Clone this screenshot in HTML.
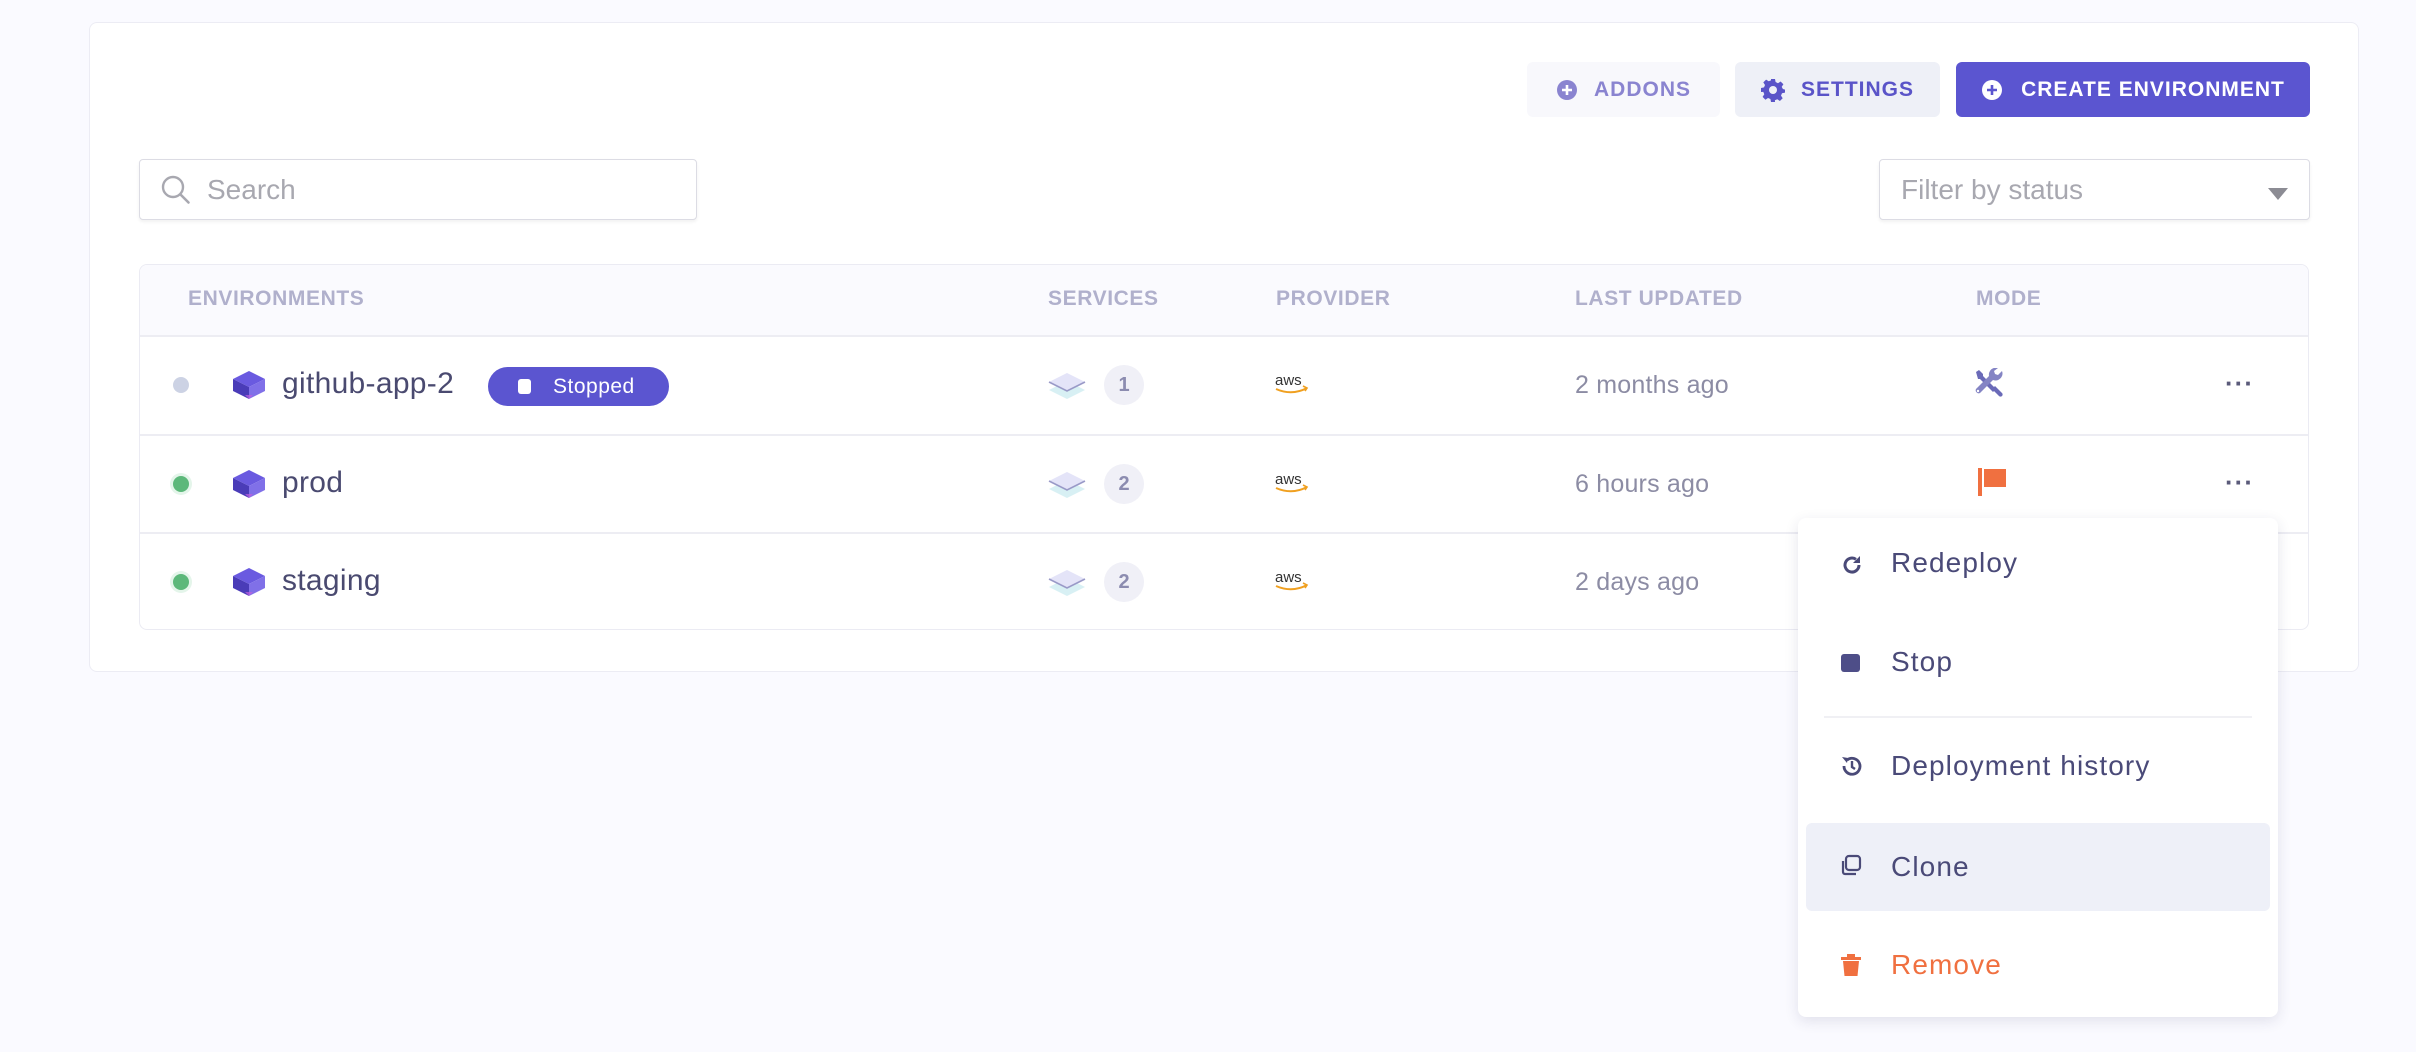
<!DOCTYPE html>
<html><head><meta charset="utf-8">
<style>
*{box-sizing:border-box;margin:0;padding:0}
body{width:2416px;height:1052px;background:#fafaff;font-family:"Liberation Sans",sans-serif;position:relative;overflow:hidden;color:#4a4a70}
.abs{position:absolute}
.card{left:89px;top:22px;width:2270px;height:650px;background:#fff;border:1px solid #ececf4;border-radius:8px}
.btn{height:55px;top:62px;border-radius:6px;display:flex;align-items:center;justify-content:center;font-weight:bold;font-size:21px;letter-spacing:1px}
.inp{top:159px;height:61px;background:#fff;border:1px solid #dcdce4;border-radius:4px;box-shadow:0 2px 3px rgba(0,0,0,.06);font-size:28px;color:#a8a8b0;display:flex;align-items:center}
.table{left:139px;top:264px;width:2170px;height:366px;border:1px solid #ebebf3;border-radius:8px;background:#fff;overflow:hidden}
.head{left:0;top:0;width:100%;height:72px;background:#fafafe;border-bottom:2px solid #ededf3}
.h{top:287px;font-size:21px;font-weight:bold;color:#b0b0cc;letter-spacing:.6px}
.line{left:140px;width:2168px;height:2px;background:#ededf3}
.dot{width:16px;height:16px;border-radius:50%}
.name{font-size:30px;color:#4a4a70;letter-spacing:.3px}
.badge{width:40px;height:40px;border-radius:50%;background:#f0f0f7;color:#8c8cb0;font-size:20px;font-weight:bold;display:flex;align-items:center;justify-content:center}
.time{font-size:25px;color:#8c8ca4;letter-spacing:.2px}
.dots{font-size:26px;color:#5a5a7a;font-weight:bold;letter-spacing:1px}
.menu{left:1798px;top:518px;width:480px;height:499px;background:#fff;border-radius:8px;box-shadow:0 4px 14px rgba(40,40,90,.12)}
.mi{left:93px;font-size:28px;letter-spacing:1.1px;color:#4a4a78}
</style></head><body>
<div class="abs card"></div>

<div class="abs btn" style="left:1527px;width:193px;background:#f8f8fc;color:#8a84d0"><svg width="22" height="22" viewBox="0 0 22 22" style="margin-right:16px"><circle cx="11" cy="11" r="10" fill="#8a84d0"/><path d="M11 6v10M6 11h10" stroke="#fff" stroke-width="2.6"/></svg>ADDONS</div>
<div class="abs btn" style="left:1735px;width:205px;background:#eef0f7;color:#5a54c8"><svg width="24" height="24" viewBox="0 0 24 24" style="margin-right:16px"><path fill="#5a54c8" d="M10 1h4l.6 3 2.4 1.2 2.6-1.7 2.8 2.8-1.7 2.6L21.9 11l2.1.6v3l-3 .6-1 2.4 1.7 2.6-2.8 2.8-2.6-1.7-2.4 1L14 24h-4l-.6-3-2.4-1-2.6 1.7-2.8-2.8 1.7-2.6-1-2.4L0 14v-4l3-.6 1-2.4L2.3 4.4 5.1 1.6l2.6 1.7L10 2.4z"/><circle cx="12" cy="12" r="4" fill="#eef0f7"/></svg>SETTINGS</div>
<div class="abs btn" style="left:1956px;width:354px;background:#5b55d0;color:#fff"><svg width="22" height="22" viewBox="0 0 22 22" style="margin-right:18px"><circle cx="11" cy="11" r="10" fill="#fff"/><path d="M11 6v10M6 11h10" stroke="#5b55d0" stroke-width="2.6"/></svg>CREATE ENVIRONMENT</div>

<div class="abs inp" style="left:139px;width:558px;padding-left:67px">Search</div>
<svg class="abs" style="left:160px;top:174px" width="32" height="32" viewBox="0 0 32 32"><circle cx="13" cy="13" r="10" fill="none" stroke="#a8a8b0" stroke-width="2.4"/><path d="M20.5 20.5l8 8" stroke="#a8a8b0" stroke-width="2.6" stroke-linecap="round"/></svg>
<div class="abs inp" style="left:1879px;width:431px;padding-left:21px">Filter by status</div>
<svg class="abs" style="left:2268px;top:188px" width="20" height="12" viewBox="0 0 20 12"><path d="M0 0h20L10 12z" fill="#8c8c94"/></svg>

<div class="abs table"><div class="abs head"></div></div>
<div class="abs h" style="left:188px">ENVIRONMENTS</div>
<div class="abs h" style="left:1048px">SERVICES</div>
<div class="abs h" style="left:1276px">PROVIDER</div>
<div class="abs h" style="left:1575px">LAST UPDATED</div>
<div class="abs h" style="left:1976px">MODE</div>
<div class="abs line" style="top:434px"></div>
<div class="abs line" style="top:532px"></div>

<div class="abs dot" style="left:173px;top:377px;background:#ccd2e4"></div>
<div class="abs dot" style="left:173px;top:476px;background:#5cb87a;box-shadow:0 0 0 3px #e4f5ea"></div>
<div class="abs dot" style="left:173px;top:574px;background:#5cb87a;box-shadow:0 0 0 3px #e4f5ea"></div>

<svg width="0" height="0" style="position:absolute"><defs><symbol id="cube" viewBox="0 0 36 32"><path d="M18 2l16 8-16 8-16-8z" fill="#6a5ae0"/><path d="M2 10l16 8v12L2 22z" fill="#4a3cb8"/><path d="M34 10l-16 8v12l16-8z" fill="#8070e8"/><path d="M14 26l4 4 4-4" fill="#c060e0" opacity=".7"/></symbol>
<symbol id="layers" viewBox="0 0 40 32"><path d="M20 12l18 9-18 9-18-9z" fill="#d8f0f4"/><path d="M20 4l18 9-18 9-18-9z" fill="#e4e4f8"/><path d="M2 13l18 9 18-9" fill="none" stroke="#9a9ac8" stroke-width="1.6"/></symbol>
<symbol id="aws" viewBox="0 0 36 24"><text x="1" y="13" font-family="Liberation Sans" font-size="15" fill="#333">aws</text><path d="M2 17q16 7 31-1" fill="none" stroke="#f0a020" stroke-width="2"/><path d="M29 14l4 2-2 3" fill="none" stroke="#f0a020" stroke-width="1.6"/></symbol></defs></svg>

<svg class="abs" style="left:231px;top:369px" width="36" height="32"><use href="#cube"/></svg>
<svg class="abs" style="left:231px;top:468px" width="36" height="32"><use href="#cube"/></svg>
<svg class="abs" style="left:231px;top:566px" width="36" height="32"><use href="#cube"/></svg>
<div class="abs name" style="left:282px;top:367px">github-app-2</div>
<div class="abs name" style="left:282px;top:466px">prod</div>
<div class="abs name" style="left:282px;top:564px">staging</div>
<div class="abs" style="left:488px;top:367px;width:181px;height:39px;border-radius:20px;background:#5b55d0;color:#fff;font-size:21px;display:flex;align-items:center;padding-left:30px;letter-spacing:.5px"><span style="width:13px;height:15px;background:#fff;border-radius:3px;margin-right:22px"></span>Stopped</div>

<svg class="abs" style="left:1047px;top:369px" width="40" height="32"><use href="#layers"/></svg>
<svg class="abs" style="left:1047px;top:468px" width="40" height="32"><use href="#layers"/></svg>
<svg class="abs" style="left:1047px;top:566px" width="40" height="32"><use href="#layers"/></svg>
<div class="abs badge" style="left:1104px;top:365px">1</div>
<div class="abs badge" style="left:1104px;top:464px">2</div>
<div class="abs badge" style="left:1104px;top:562px">2</div>

<svg class="abs" style="left:1274px;top:372px" width="36" height="24"><use href="#aws"/></svg>
<svg class="abs" style="left:1274px;top:471px" width="36" height="24"><use href="#aws"/></svg>
<svg class="abs" style="left:1274px;top:569px" width="36" height="24"><use href="#aws"/></svg>

<div class="abs time" style="left:1575px;top:371px">2 months ago</div>
<div class="abs time" style="left:1575px;top:470px">6 hours ago</div>
<div class="abs time" style="left:1575px;top:568px">2 days ago</div>

<svg class="abs" style="left:1973px;top:368px" width="32" height="32" viewBox="0 0 32 32">
<path d="M3 4l3-2 4 4v2l13 13-3 3L7 11H5z" fill="#6a6ab8"/><path d="M19 21l3-3 7 7a2 2 0 0 1-3 3z" fill="#6a6ab8"/>
<path d="M29 3l-4 4-3-1-1-3 4-3a7 7 0 0 0-9 8L3 21a3 3 0 0 0 4 4l13-13a7 7 0 0 0 9-9z" fill="#8484c4"/><circle cx="5" cy="23" r="1.2" fill="#fff"/></svg>
<svg class="abs" style="left:1976px;top:466px" width="32" height="32" viewBox="0 0 32 32"><rect x="2" y="2" width="4" height="28" fill="#f07040"/><path d="M8 3h22v18H8z" fill="#f07040"/></svg>

<div class="abs dots" style="left:2225px;top:368px">···</div>
<div class="abs dots" style="left:2225px;top:467px">···</div>

<div class="abs menu">
 <svg class="abs" style="left:42px;top:35px" width="24" height="24" viewBox="0 0 24 24"><path d="M19 12a7 7 0 1 1-3-5.7" fill="none" stroke="#4a4a78" stroke-width="3"/><path d="M20 3v7h-7z" fill="#4a4a78"/></svg>
 <div class="abs mi" style="top:29px">Redeploy</div>
 <div class="abs" style="left:43px;top:136px;width:19px;height:18px;border-radius:3px;background:#4e4e88"></div>
 <div class="abs mi" style="top:128px">Stop</div>
 <div class="abs" style="left:26px;top:198px;width:428px;height:2px;background:#f0f0f4"></div>
 <svg class="abs" style="left:42px;top:236px" width="24" height="24" viewBox="0 0 24 24"><path d="M4 12a8 8 0 1 0 3-6" fill="none" stroke="#4a4a78" stroke-width="2.8"/><path d="M2 3l6 1-1 5z" fill="#4a4a78"/><path d="M12 7v6l3 2" fill="none" stroke="#4a4a78" stroke-width="2.4"/></svg>
 <div class="abs mi" style="top:232px">Deployment history</div>
 <div class="abs" style="left:8px;top:305px;width:464px;height:88px;background:#eef0f8;border-radius:6px"></div>
 <svg class="abs" style="left:41px;top:336px" width="24" height="24" viewBox="0 0 24 24"><rect x="7" y="2" width="14" height="14" rx="3" fill="none" stroke="#4a4a78" stroke-width="2.2"/><path d="M4 7v11a2 2 0 0 0 2 2h11" fill="none" stroke="#4a4a78" stroke-width="2.2"/></svg>
 <div class="abs mi" style="top:333px">Clone</div>
 <svg class="abs" style="left:42px;top:435px" width="22" height="24" viewBox="0 0 22 24"><path d="M1 4h20v3H1zM7 1h8v3H7z" fill="#f07040"/><path d="M3 8h16l-1.5 15h-13z" fill="#f07040"/></svg>
 <div class="abs mi" style="top:431px;color:#f07040">Remove</div>
</div>
</body></html>
